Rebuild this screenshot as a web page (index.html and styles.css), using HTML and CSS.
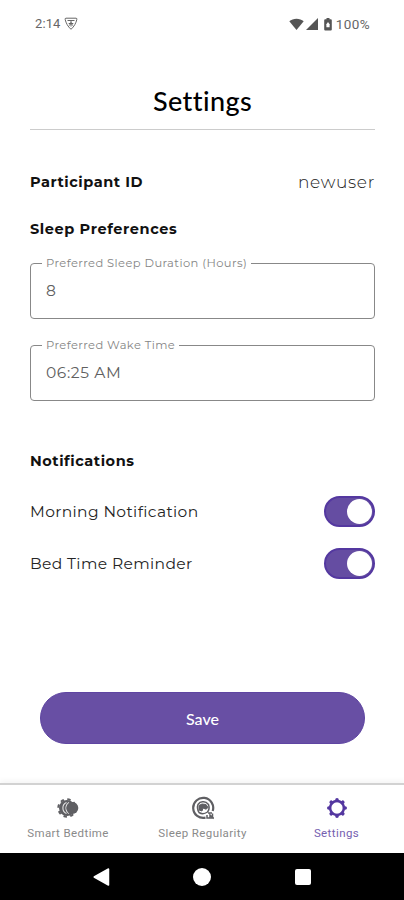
FILE: index.html
```html
<!DOCTYPE html>
<html lang="en">
<head>
<meta charset="utf-8">
<title>Settings</title>
<link rel="stylesheet" href="styles.css">
</head>
<body>
<div class="screen">
  <div class="status">
    <span class="clock">2:14</span>
    <svg class="shield" width="14" height="14" viewBox="0 0 14 14" fill="none" stroke="#666"><path d="M2 1.200h10q1.200 0 .8 1.400C12 6 10.200 9.500 7 12.300 3.800 9.500 2 6 1.200 2.600Q.8 1.200 2 1.200z"/><path d="M3.500 3.500h7M7 3.500v6M4.700 6.500h4.600M5.500 8.500 7 5.500l1.500 3"/></svg>
    <span class="grow"></span>
    <svg width="15" height="13" viewBox="0 0 15 13" fill="#555"><path d="M.3 3.300C4-.2 11-.2 14.700 3.300L7.500 12z"/></svg>
    <svg class="signal" width="12" height="12" viewBox="0 0 12 12" fill="#555"><path d="M0 12 12 0v12z"/></svg>
    <svg class="battery" width="8" height="13" viewBox="0 0 8 13"><path fill="#555" d="M2.500 0h3v1.300h1.300q1 0 1 1V11.500q0 1-1 1H1.200q-1 0-1-1V2.300q0-1 1-1h1.300z"/><path fill="#fff" d="M4 4 2.400 6.300v2.900h3.200V6.300z"/></svg>
    <span class="percent">100%</span>
  </div>
  <h1>Settings</h1>
  <div class="row participant"><b class="t-id">Participant ID</b><span class="user">newuser</span></div>
  <h2 class="t-pref">Sleep Preferences</h2>
  <fieldset><legend>Preferred Sleep Duration (Hours)</legend><span>8</span></fieldset>
  <fieldset class="wake"><legend>Preferred Wake Time</legend><span>06:25 AM</span></fieldset>
  <h2 class="t-notif">Notifications</h2>
  <div class="row toggle-row"><span>Morning Notification</span><span class="toggle"></span></div>
  <div class="row toggle-row"><span>Bed Time Reminder</span><span class="toggle"></span></div>
  <button>Save</button>
  <nav>
    <div class="tab tab-bed">
      <svg width="22" height="22" viewBox="0 0 22 22"><circle cx="10" cy="11" r="8.700" fill="none" stroke="#5f5f63" stroke-width="2" stroke-dasharray="3.400 3.433"/><circle cx="10" cy="11" r="8" fill="#5f5f63"/><path d="M9.500 5.500a6 6 0 0 0 0 11M12 5.500a6.500 6.500 0 0 0 0 11" fill="none" stroke="#e4e4e4" stroke-width="1.100"/><circle cx="15.300" cy="11" r="6" fill="#5f5f63"/></svg>
      <span>Smart Bedtime</span>
    </div>
    <div class="tab tab-reg">
      <svg width="24" height="24" viewBox="0 0 24 24" fill="none" stroke="#5f5f63"><path d="M14.500 21.600A10 10 0 1 1 21.700 15" stroke-width="2.200"/><path d="M7 8.500Q9 5.500 12 5.800 15 5.500 17.500 8.500 19 13 16.500 16 12 19 8 16.500 5.500 12 7 8.500z" stroke-width="1.500"/><path d="M8 9.500 11 8l4 .5 2 3-2 1.700-3-1.200-1 3-3-1z" fill="#5f5f63"/><path d="M17 17h4M16 19v3h7M19 22v-3l2.500 2.500V17.500" stroke-width="1.500"/></svg>
      <span>Sleep Regularity</span>
    </div>
    <div class="tab tab-set">
      <svg width="22" height="22" viewBox="0 0 22 22" fill="none" stroke="#5437a0"><circle cx="11" cy="11" r="6.900" stroke-width="2.500"/><g stroke-width="3.600" stroke-linecap="round"><path d="M11 2.800v.6M11 18.600v.6M2.800 11h.6M18.600 11h.6M5.200 5.200l.4.400M16.400 16.400l.4.400M5.200 16.800l.4-.4M16.400 5.600l.4-.4"/></g></svg>
      <span>Settings</span>
    </div>
  </nav>
  <div class="system">
    <svg width="17" height="18" viewBox="0 0 17 18" fill="#fff" stroke="#fff" stroke-width="1.500" stroke-linejoin="round"><path d="M1.200 9 15.500 1v16z"/></svg>
    <i class="home"></i>
    <i class="recent"></i>
  </div>
</div>
</body>
</html>
```
FILE: styles.css
```css
* { box-sizing: border-box; }
body { margin: 0; background: #fff; color: #111; font-family: Montserrat, Inter, sans-serif; }
.screen { width: 404px; height: 900px; display: flex; flex-direction: column; overflow: hidden; }
.screen svg { display: block; flex: none; }
.status { height: 48px; padding: 0 34px 0 35px; display: flex; align-items: center; font: 13px/16px Roboto, sans-serif; color: #666; flex: none; }
.clock { letter-spacing: .1px; }
.shield { margin-left: 4px; }
.grow { flex: 1; }
.signal { margin-left: 2px; }
.battery { margin: 0 4px 0 6px; }
.percent { font-size: 13.500px; letter-spacing: .4px; }
h1 { margin: 30px 29px 0 30px; height: 52px; border-bottom: 1.500px solid #ccc; text-align: center; font: 500 27px/45px Lato, sans-serif; color: #000; letter-spacing: .4px; flex: none; }
.row { display: flex; align-items: center; justify-content: space-between; margin: 0 29px 0 30px; flex: none; }
.participant { height: 20px; margin-top: 42px; }
.participant b, h2 { font-size: 14.500px; line-height: 20px; font-weight: 700; }
.t-id { letter-spacing: .55px; }
.user { font-size: 17px; font-weight: 300; color: #222; letter-spacing: .65px; }
h2 { margin: 27px 30px 0; flex: none; }
.t-pref { letter-spacing: .6px; }
fieldset { margin: 16px 29px 0 30px; padding: 0 0 0 15px; height: 64px; border: 1px solid #888; border-radius: 4px; font-size: 15.500px; color: #606060; letter-spacing: .6px; flex: none; }
legend { height: 16px; margin-left: -4px; padding: 0 4px; font-size: 11.500px; line-height: 16px; color: #858585; letter-spacing: .42px; }
fieldset span { display: block; line-height: 20px; margin-top: 10px; }
.wake { margin-top: 18px; }
.t-notif { margin-top: 50px; margin-bottom: 14px; letter-spacing: .55px; }
.toggle-row { height: 52px; font-size: 15.500px; letter-spacing: .37px; color: #252525; }
.toggle { width: 51px; height: 31px; border-radius: 16px; background: #654da2; border: 2px solid #5438a0; display: flex; align-items: center; justify-content: flex-end; padding-right: 1px; }
.toggle::after { content: ""; width: 25px; height: 25px; border-radius: 50%; background: #fff; }
button { margin: 103px 39px 0 40px; height: 52px; border: 1px solid #5f45a2; border-radius: 26px; background: #684fa4; color: #fff; font: 500 16px Lato, sans-serif; flex: none; }
nav { margin-top: auto; height: 70px; border-top: 2px solid #d2d2d2; box-shadow: 0 -3px 5px #0000000a; display: grid; grid-template-columns: 136px 133px 135px; flex: none; }
.tab { display: flex; flex-direction: column; align-items: center; font: 11.500px/14px Roboto, sans-serif; color: #8a8a8a; padding-top: 11px; }
.tab svg { height: 24px; }
.tab span { margin-top: 6px; letter-spacing: .4px; }
.tab-set span { color: #7560b0; }
.system { height: 47px; background: #000; display: flex; align-items: center; padding-left: 93px; flex: none; }
.home { width: 18px; height: 18px; border-radius: 50%; background: #fff; margin-left: 83px; }
.recent { width: 16px; height: 16px; border-radius: 2px; background: #fff; margin-left: 84px; }
```
